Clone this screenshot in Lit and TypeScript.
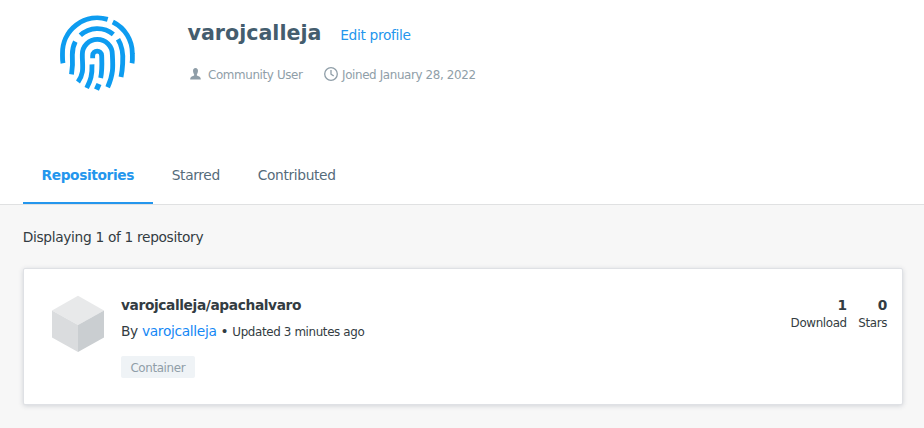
import { LitElement, html, css, svg } from "lit";
import { customElement } from "lit/decorators.js";

const fingerprint = svg`
  <svg class="avatar" viewBox="0 0 300 285" width="100" height="95" fill="none" stroke="#0d9cf0" stroke-width="14.5">
    <path d="M39 175C37 165 37.500 160 37.500 146A105 105 0 0 1 173 43"/>
    <path d="M188.500 51A105 105 0 0 1 247 146C247.500 160 248 165 246 175"/>
    <path d="M91 91A75 75 0 0 1 190 88"/>
    <path d="M76 110Q67 127 67 149Q69 180 64.500 208"/>
    <path d="M204 103C217 124 220 150 218 175Q217 197 213 216"/>
    <path d="M84 231C102 206 98 187 97 157V148A45 45 0 0 1 187 148C189 184 191 206 173 247"/>
    <path d="M128 160V152C128 134 155 134 155 152C156 180 157 196 152 219"/>
    <path d="M126 178C127 211 122 226 110 249"/>
    <path d="M147 237L139.500 254" stroke-width="16"/>
  </svg>`;

@customElement("app-root")
export class AppRoot extends LitElement {
  static styles = css`
    :host {
      display: block;
      height: 428px;
      overflow: hidden;
      background: #f7f7f7;
      color: #333c42;
      font: 13.750px/20px "DejaVu Sans", sans-serif;
      letter-spacing: -.33px;
    }
    * { box-sizing: border-box; }
    svg { display: block; flex: none; }
    .top { height: 205px; background: #fff; border-bottom: 1px solid #e0e1e2; display: flex; flex-direction: column; justify-content: space-between; }
    .profile { display: flex; padding: 5px 0 0 50px; }
    .info { padding: 12px 0 0 37.500px; }
    .name-row { display: flex; align-items: baseline; gap: 18.750px; }
    .name { margin: 0; font-size: 20.625px; line-height: 32px; letter-spacing: 0; color: #445d6e; }
    .edit { color: #2496ed; }
    .meta { display: flex; align-items: center; margin-top: 16px; color: #8f9ea8; line-height: 22px; height: 20px; }
    .meta, .small, .tag, .unit { font-size: 11.900px; letter-spacing: -.37px; }
    .person { margin: -2px 7px 0 2.500px; }
    .clock { margin: -2px 4.500px 0 21px; }
    .tabs { display: flex; padding-left: 22.500px; }
    .tab { height: 59px; padding: 20px 18.750px 0 19px; color: #556b7a; }
    .tab.active { color: #2496ed; font-weight: bold; letter-spacing: -.39px; border-bottom: 2px solid #2496ed; }
    .list { padding: 22px 21px 0 22.750px; }
    .card {
      display: flex; height: 137px; margin-top: 21px; padding: 26px 15px 0 27.250px;
      background: #fff; border: 1px solid #dfe1e5; border-radius: 2px;
      box-shadow: 0 1px 5px rgba(40, 50, 80, .18);
    }
    .body { flex: 1; margin-left: 16px; }
    .title { font-weight: bold; letter-spacing: -.38px; }
    .by { margin-top: 6px; }
    .link { color: #1488f5; }
    .tag { display: block; width: 74px; margin-top: 14px; padding: 0 9.375px; height: 22px; line-height: 24px; border-radius: 2px; background: #eff3f6; color: #8f9ea8; }
    .stats { display: flex; gap: 11.500px; text-align: right; }
    .count { font-weight: bold; }
    .unit { line-height: 16px; }
  `;

  private stat(count: number, unit: string) {
    return html`<div><div class="count">${count}</div><div class="unit">${unit}</div></div>`;
  }

  render() {
    return html`
      <header class="top">
        <div class="profile">
          ${fingerprint}
          <div class="info">
            <div class="name-row"><h1 class="name">varojcalleja</h1><a class="edit">Edit profile</a></div>
            <div class="meta">
              <svg class="person" width="11" height="12" viewBox="0 0 12 12" preserveAspectRatio="none" fill="#8f9ea8"><path d="M6 0C4.100 0 3.200 1.400 3.300 3C3.400 4.600 4 5.500 4.500 6.300V7.600C3 8.500 .4 8.300 .2 11.500H11.800C11.600 8.300 9 8.500 7.500 7.600V6.300C8 5.500 8.600 4.600 8.700 3C8.800 1.400 7.900 0 6 0Z"/></svg>
              <span>Community User</span>
              <svg class="clock" width="14" height="14" viewBox="0 0 14 14" fill="none" stroke="#8f9ea8" stroke-width="1.300"><circle cx="7" cy="7" r="6.300"/><path d="M7 3V7.200L9.700 8.900"/></svg>
              <span>Joined January 28, 2022</span>
            </div>
          </div>
        </div>
        <nav class="tabs">
          <a class="tab active">Repositories</a>
          <a class="tab">Starred</a>
          <a class="tab">Contributed</a>
        </nav>
      </header>
      <main class="list">
        <div>Displaying 1 of 1 repository</div>
        <section class="card">
          <svg width="54" height="58" viewBox="0 0 54 58">
            <path fill="#e8e9ea" d="M27 .7L53 15.500L27 30L1 15.500Z"/>
            <path fill="#dadcde" d="M1 15.500L27 30V57L1 42.500Z"/>
            <path fill="#caced1" d="M53 15.500L27 30V57L53 42.500Z"/>
          </svg>
          <div class="body">
            <div class="title">varojcalleja/apachalvaro</div>
            <div class="by">By <a class="link">varojcalleja</a> • <span class="small">Updated 3 minutes ago</span></div>
            <span class="tag">Container</span>
          </div>
          <div class="stats">${this.stat(1, "Download")}${this.stat(0, "Stars")}</div>
        </section>
      </main>`;
  }
}
